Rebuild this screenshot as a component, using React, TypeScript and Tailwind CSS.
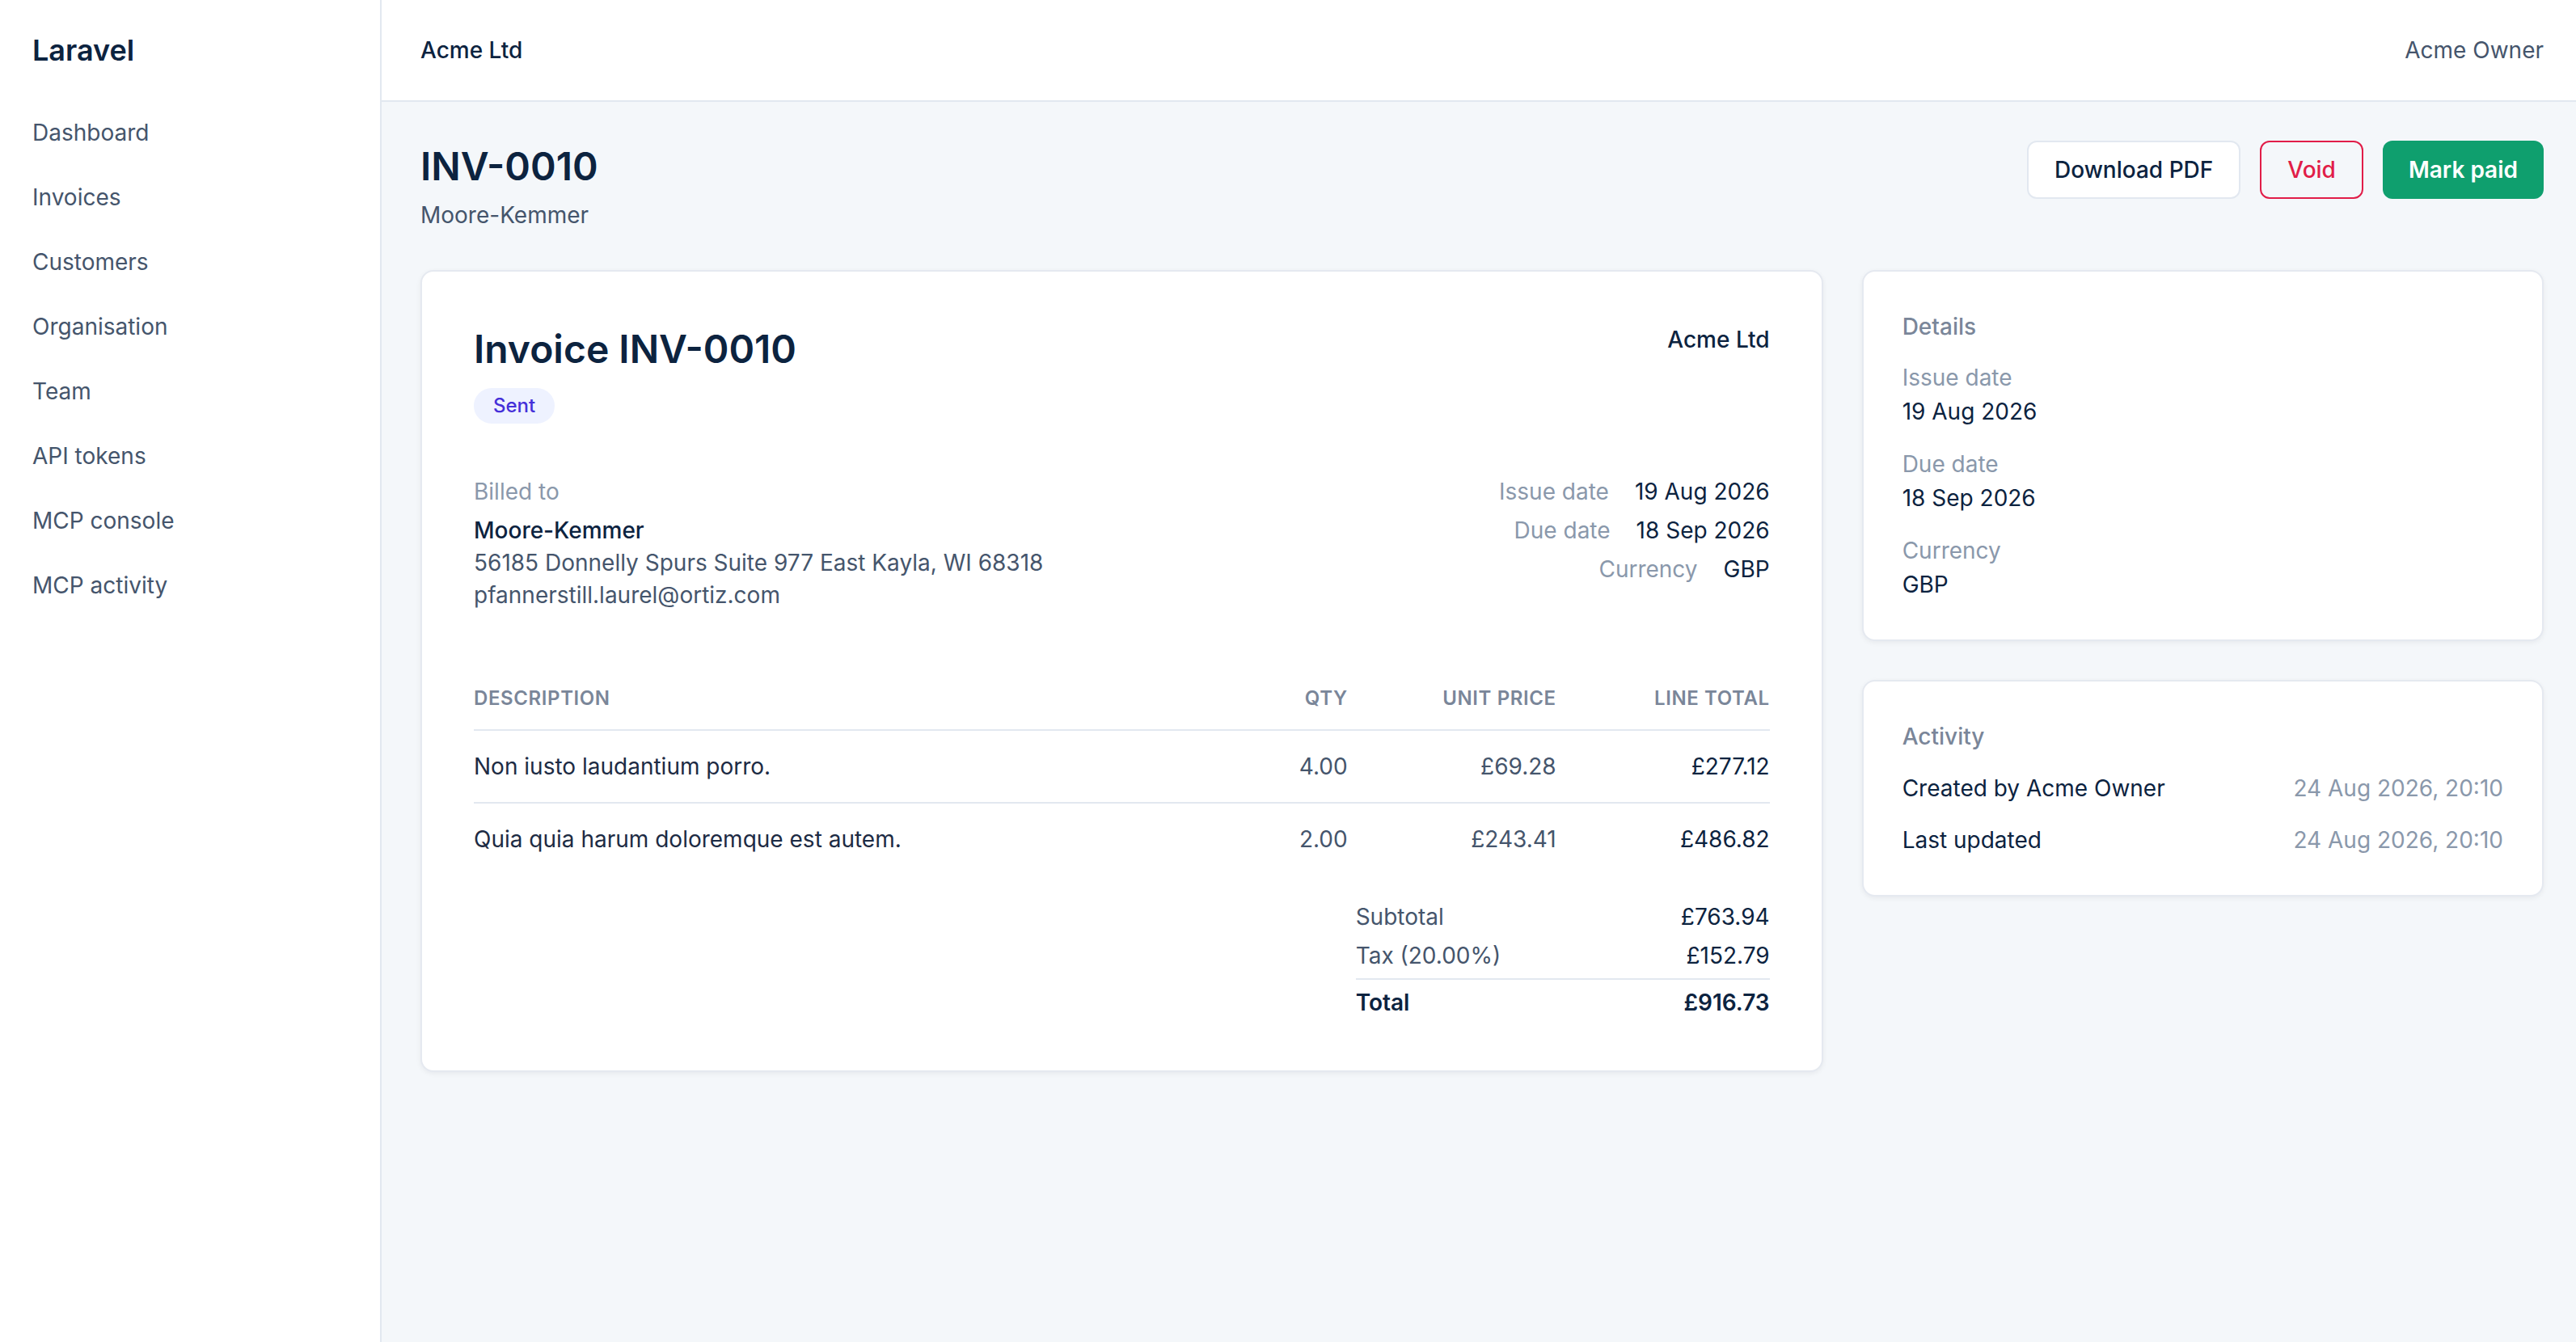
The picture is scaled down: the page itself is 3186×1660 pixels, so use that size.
const navItems = ["Dashboard", "Invoices", "Customers", "Organisation", "Team", "API tokens", "MCP console", "MCP activity"];

const lines = [
  { description: "Non iusto laudantium porro.", qty: "4.00", unit: "£69.28", total: "£277.12" },
  { description: "Quia quia harum doloremque est autem.", qty: "2.00", unit: "£243.41", total: "£486.82" },
];

const details = [
  { label: "Issue date", value: "19 Aug 2026" },
  { label: "Due date", value: "18 Sep 2026" },
  { label: "Currency", value: "GBP" },
];

const activity = [
  { label: "Created by Acme Owner", when: "24 Aug 2026, 20:10" },
  { label: "Last updated", when: "24 Aug 2026, 20:10" },
];

// the page is drawn at twice the usual size (2x screen)
const App = () => {
  return (
    <div className="flex min-h-screen bg-[#f4f7fa] font-['Inter','Noto_Sans',sans-serif] text-[28px] leading-[40px] text-[#0c233f] antialiased">
      {/* Sidebar */}
      <aside className="w-[472px] shrink-0 border-r-2 border-[#e2e8f0] bg-white">
        <div className="flex h-[124px] items-center px-10">
          <span className="text-4xl font-semibold">Laravel</span>
        </div>
        <nav className="flex flex-col">
          {navItems.map((item) => (
            <a key={item} className="px-10 py-5 text-[#45556c]">
              {item}
            </a>
          ))}
        </nav>
      </aside>

      <div className="flex min-w-0 flex-1 flex-col">
        {/* Top bar */}
        <header className="flex h-[126px] items-center justify-between border-b-2 border-[#e2e8f0] bg-white pr-10 pl-12">
          <span className="font-medium">Acme Ltd</span>
          <span className="text-[#45556c]">Acme Owner</span>
        </header>

        <main className="pt-12 pr-10 pb-12 pl-12">
          {/* Page heading */}
          <div className="mb-12 flex items-start justify-between">
            <div>
              <h1 className="text-5xl leading-[64px] font-semibold">INV-0010</h1>
              <p className="mt-2 text-[#45556c]">Moore-Kemmer</p>
            </div>
            <div className="flex items-center gap-6">
              <button className="flex h-[72px] items-center rounded-xl border-2 border-[#e2e8f0] bg-white px-8 font-medium">
                Download PDF
              </button>
              <button className="flex h-[72px] items-center rounded-xl border-2 border-[#e11d48] px-8 font-medium text-[#e11d48]">
                Void
              </button>
              <button className="flex h-[72px] items-center rounded-xl bg-[#0f9f6e] px-8 font-semibold text-white">
                Mark paid
              </button>
            </div>
          </div>

          <div className="grid grid-cols-3 items-start gap-12">
            {/* Invoice document */}
            <section className="col-span-2 rounded-2xl border-2 border-[#e5e9f0] bg-white p-16 shadow-[0_2px_6px_rgba(15,23,42,0.06)]">
              <div className="flex items-start justify-between">
                <div>
                  <h2 className="text-5xl leading-[64px] font-semibold">Invoice INV-0010</h2>
                  <span className="mt-4 inline-block rounded-full bg-[#eef2ff] px-6 py-[6px] text-2xl font-medium text-[#4530d9]">
                    Sent
                  </span>
                </div>
                <span className="font-medium">Acme Ltd</span>
              </div>

              <div className="mt-16 flex items-start justify-between">
                <div>
                  <p className="text-[#8a98ab]">Billed to</p>
                  <p className="mt-2 font-medium">Moore-Kemmer</p>
                  <p className="text-[#45556c]">56185 Donnelly Spurs Suite 977 East Kayla, WI 68318</p>
                  <p className="text-[#45556c]">pfannerstill.laurel@ortiz.com</p>
                </div>
                <div className="space-y-2">
                  {details.map((d) => (
                    <div key={d.label} className="flex justify-end gap-8">
                      <span className="text-[#8a98ab]">{d.label}</span>
                      <span>{d.value}</span>
                    </div>
                  ))}
                </div>
              </div>

              {/* Line items */}
              <div className="mt-[68px]">
                <div className="grid grid-cols-[1fr_12rem_258px_264px] border-b-2 border-[#e2e8f0] pt-6 pb-[22px] text-2xl font-semibold tracking-wide text-[#7a8699] uppercase">
                  <span>Description</span>
                  <span className="text-right">Qty</span>
                  <span className="text-right">Unit price</span>
                  <span className="text-right">Line total</span>
                </div>
                <div className="divide-y-2 divide-[#e2e8f0]">
                  {lines.map((l) => (
                    <div key={l.description} className="grid grid-cols-[1fr_12rem_258px_264px] py-6">
                      <span className="text-[#1d2b44]">{l.description}</span>
                      <span className="text-right text-[#45556c]">{l.qty}</span>
                      <span className="text-right text-[#45556c]">{l.unit}</span>
                      <span className="text-right">{l.total}</span>
                    </div>
                  ))}
                </div>
              </div>

              {/* Totals */}
              <div className="mt-8 ml-auto w-128 space-y-2">
                <div className="flex justify-between">
                  <span className="text-[#45556c]">Subtotal</span>
                  <span>£763.94</span>
                </div>
                <div className="flex justify-between">
                  <span className="text-[#45556c]">Tax (20.00%)</span>
                  <span>£152.79</span>
                </div>
                <div className="flex justify-between border-t-2 border-[#e2e8f0] pt-2 font-semibold">
                  <span>Total</span>
                  <span>£916.73</span>
                </div>
              </div>
            </section>

            {/* Side cards */}
            <div className="space-y-12">
              <section className="rounded-2xl border-2 border-[#e5e9f0] bg-white p-12 shadow-[0_2px_6px_rgba(15,23,42,0.06)]">
                <h3 className="font-medium text-[#7a8699]">Details</h3>
                <dl className="mt-[23px] space-y-[25px]">
                  {details.map((d) => (
                    <div key={d.label}>
                      <dt className="text-[#8a98ab]">{d.label}</dt>
                      <dd className="mt-0.5">{d.value}</dd>
                    </div>
                  ))}
                </dl>
              </section>

              <section className="rounded-2xl border-2 border-[#e5e9f0] bg-white p-12 shadow-[0_2px_6px_rgba(15,23,42,0.06)]">
                <h3 className="font-medium text-[#7a8699]">Activity</h3>
                <ul className="mt-6 space-y-6">
                  {activity.map((a) => (
                    <li key={a.label} className="flex justify-between">
                      <span>{a.label}</span>
                      <span className="text-[#8a98ab]">{a.when}</span>
                    </li>
                  ))}
                </ul>
              </section>
            </div>
          </div>
        </main>
      </div>
    </div>
  );
};

export default App;
